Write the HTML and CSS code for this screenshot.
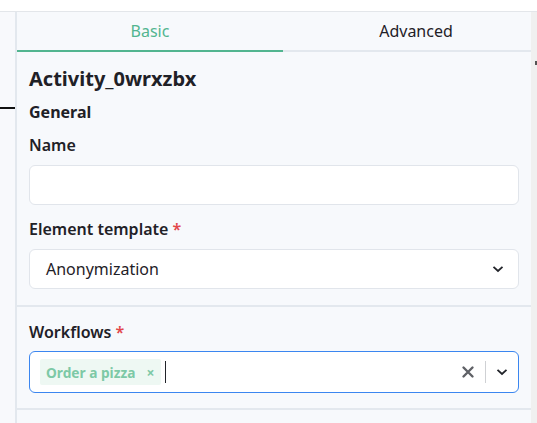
FILE: index.html
```html
<!DOCTYPE html>
<html lang="en">
<head>
<meta charset="utf-8">
<title>Properties</title>
<link rel="stylesheet" href="styles.css">
</head>
<body>
<div class="topbar"></div>
<div class="main">
  <div class="canvas">
    <div class="connector"></div>
  </div>
  <div class="panel">
    <div class="tabs">
      <div class="tab active">Basic</div>
      <div class="tab">Advanced</div>
    </div>
    <div class="group">
      <h1 class="element-id">Activity_0wrxzbx</h1>
      <h2 class="group-title">General</h2>
      <label class="label first">Name</label>
      <div class="input"></div>
      <label class="label">Element template <span class="req">*</span></label>
      <div class="input select">
        <span class="value">Anonymization</span>
        <svg class="chev" width="12" height="8" viewBox="0 0 12 8"><path d="M1.5 1.8 6 6 10.5 1.8" fill="none" stroke="#22242a" stroke-width="1.8"/></svg>
      </div>
    </div>
    <div class="group second">
      <label class="label">Workflows <span class="req">*</span></label>
      <div class="input multi">
        <div class="values">
          <span class="tag">Order a pizza <span class="tag-x">×</span></span>
          <span class="caret"></span>
        </div>
        <div class="indicators">
          <svg class="clear" width="14" height="14" viewBox="0 0 14 14"><path d="M2.5 2.5 11.5 11.5M11.5 2.5 2.5 11.5" stroke="#5f6166" stroke-width="2.4" stroke-linecap="round"/></svg>
          <span class="sep"></span>
          <svg class="chev" width="12" height="8" viewBox="0 0 12 8"><path d="M1.5 1.8 6 6 10.5 1.8" fill="none" stroke="#22242a" stroke-width="1.8"/></svg>
        </div>
      </div>
    </div>
    <div class="group rest"></div>
  </div>
  <div class="gutter"><span class="arrow"></span></div>
</div>
</body>
</html>
```

FILE: styles.css
```css
* { box-sizing: border-box; }

html, body {
  margin: 0;
  height: 100%;
  overflow: hidden;
}

body {
  background: #ffffff;
  font-family: "Noto Sans", "Open Sans", sans-serif;
  color: #1f2127;
}

.topbar {
  height: 12px;
  border-bottom: 1px solid #e3e6ea;
}

.main {
  display: flex;
  height: 411px;
}

/* diagram canvas strip on the left */
.canvas {
  position: relative;
  width: 17px;
  flex: none;
  background: #f8f9fc;
  border-right: 2px solid #e3e8ee;
}

.connector {
  position: absolute;
  left: 0;
  top: 95px;
  width: 15px;
  height: 2px;
  background: #111;
}

.panel {
  flex: 1;
  min-width: 0;
  background: #f7f9fc;
  overflow: hidden;
}

.tabs {
  display: flex;
  width: 532px;
  border-bottom: 2px solid #e3e8ee;
}

.tab {
  width: 266px;
  flex: none;
  height: 40px;
  margin-bottom: -2px;
  border-bottom: 2px solid transparent;
  display: flex;
  align-items: center;
  justify-content: center;
  font-size: 16px;
  color: #1f2127;
}

.tab.active {
  color: #52b590;
  border-bottom-color: #52b590;
}

.group {
  padding: 15px 12px 16px;
  border-bottom: 2px solid #e3e8ee;
}

.element-id {
  margin: 0;
  font-size: 20px;
  font-weight: 700;
  line-height: 24px;
}

.group-title {
  margin: 11px 0 0;
  font-size: 16px;
  font-weight: 700;
  line-height: 20px;
}

.label {
  display: block;
  margin: 14px 0 10px;
  font-size: 16px;
  font-weight: 600;
  line-height: 20px;
}

.label.first {
  margin-top: 13px;
}

.req {
  color: #e2474b;
}

.input {
  height: 40px;
  background: #ffffff;
  border: 1px solid #e1e5eb;
  border-radius: 6px;
}

.select {
  display: flex;
  align-items: center;
  justify-content: space-between;
  padding: 0 14px 0 16px;
  font-size: 16px;
}

.select .value {
  line-height: 20px;
}

.group.second {
  padding-top: 15px;
  padding-bottom: 15px;
}

.group.second .label {
  margin-top: 0;
  margin-bottom: 9px;
}

.multi {
  height: 42px;
  display: flex;
  align-items: center;
  border-color: #3b86f0;
  padding: 0 10px 0 10px;
}

.values {
  flex: 1;
  display: flex;
  align-items: center;
}

.tag {
  display: inline-flex;
  align-items: center;
  height: 26px;
  padding: 0 7px 0 6px;
  background: #eef8f3;
  border-radius: 2px;
  color: #7dc9a6;
  font-size: 13.7px;
  font-weight: 700;
}

.tag-x {
  margin-left: 11px;
  font-size: 14px;
  font-weight: 700;
}

.caret {
  width: 1px;
  height: 22px;
  margin-left: 4px;
  background: #22242a;
}

.indicators {
  display: flex;
  align-items: center;
}

.clear {
  display: block;
  margin-right: 10px;
}

.sep {
  width: 1px;
  height: 22px;
  background: #cfd1d4;
  margin-right: 10px;
}

.chev {
  display: block;
}

.group.rest {
  border-bottom: 0;
}

.gutter {
  width: 6px;
  flex: none;
  background: #f0f0f0;
  position: relative;
}

.arrow {
  position: absolute;
  left: 4px;
  top: 49px;
  width: 2px;
  height: 4px;
  background: #555;
}
```
